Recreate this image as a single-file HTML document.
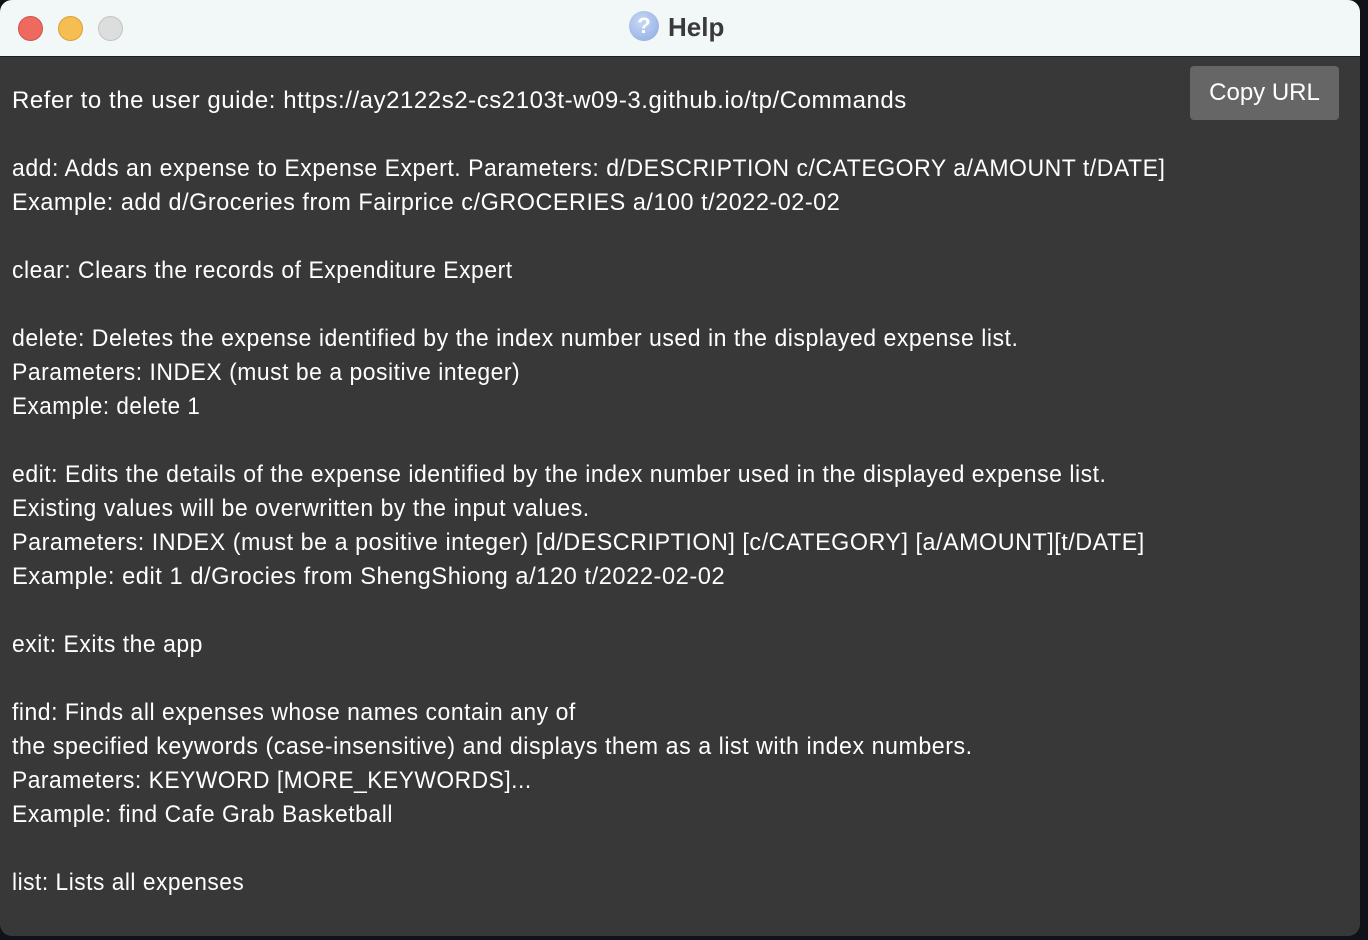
<!DOCTYPE html>
<html><head><style>
html,body{margin:0;padding:0;width:1368px;height:940px;overflow:hidden;background:#0f1218;}
.win{position:absolute;left:0;top:0;width:1360px;height:936px;background:#383838;border-radius:12px;overflow:hidden;}
.tb{position:absolute;left:0;top:0;width:100%;height:56px;background:#f2f7f8;border-bottom:1px solid #1e1e1e;}
.dot{position:absolute;top:16px;width:24px;height:24px;border-radius:50%;}
.title{position:absolute;left:668px;top:12px;font:bold 26px "Liberation Sans",sans-serif;color:#3a3a3a;}
.q{position:absolute;left:629px;top:11px;width:30px;height:30px;border-radius:50%;background:radial-gradient(circle at 40% 35%,#c9d9f5,#8aa8e0);color:#fff;font:bold 22px "Liberation Sans",sans-serif;text-align:center;line-height:30px;}
.txt{position:absolute;left:12px;top:84px;color:#fff;font:24px/34px "Liberation Sans",sans-serif;letter-spacing:0.55px;}
.txt div{height:34px;transform-origin:0 50%;white-space:pre;}
.btn{position:absolute;left:1190px;top:66px;width:149px;height:54px;background:#666;border-radius:4px;color:#fff;font:24px/54px "Liberation Sans",sans-serif;text-align:center;}
</style></head><body>
<div class="win">
<div class="tb">
<div class="dot" style="left:18px;background:#ee6a5f;border:1px solid #d0534a;width:23px;height:23px"></div>
<div class="dot" style="left:58px;background:#f6be50;border:1px solid #d9a03b;width:23px;height:23px"></div>
<div class="dot" style="left:98px;background:#dcdddd;border:1px solid #c4c4c4;width:23px;height:23px"></div>
<div class="q">?</div><div class="title">Help</div>
</div>
<div class="btn">Copy URL</div>
<div class="txt"><div>Refer to the user guide: https://ay2122s2-cs2103t-w09-3.github.io/tp/Commands</div><div></div><div style="transform:scaleX(.959)">add: Adds an expense to Expense Expert. Parameters: d/DESCRIPTION c/CATEGORY a/AMOUNT t/DATE]</div><div style="transform:scaleX(.975)">Example: add d/Groceries from Fairprice c/GROCERIES a/100 t/2022-02-02</div><div></div><div style="transform:scaleX(.954)">clear: Clears the records of Expenditure Expert</div><div></div><div style="transform:scaleX(.96)">delete: Deletes the expense identified by the index number used in the displayed expense list.</div><div style="transform:scaleX(.955)">Parameters: INDEX (must be a positive integer)</div><div style="transform:scaleX(.935)">Example: delete 1</div><div></div><div style="transform:scaleX(.958)">edit: Edits the details of the expense identified by the index number used in the displayed expense list.</div><div style="transform:scaleX(.96)">Existing values will be overwritten by the input values.</div><div style="transform:scaleX(.971)">Parameters: INDEX (must be a positive integer) [d/DESCRIPTION] [c/CATEGORY] [a/AMOUNT][t/DATE]</div><div style="transform:scaleX(.986)">Example: edit 1 d/Grocies from ShengShiong a/120 t/2022-02-02</div><div></div><div style="transform:scaleX(.955)">exit: Exits the app</div><div></div><div style="transform:scaleX(.956)">find: Finds all expenses whose names contain any of</div><div style="transform:scaleX(.967)">the specified keywords (case-insensitive) and displays them as a list with index numbers.</div><div style="transform:scaleX(.949)">Parameters: KEYWORD [MORE_KEYWORDS]...</div><div style="transform:scaleX(.955)">Example: find Cafe Grab Basketball</div><div></div><div style="transform:scaleX(.947)">list: Lists all expenses</div></div>
</div>
</body></html>
